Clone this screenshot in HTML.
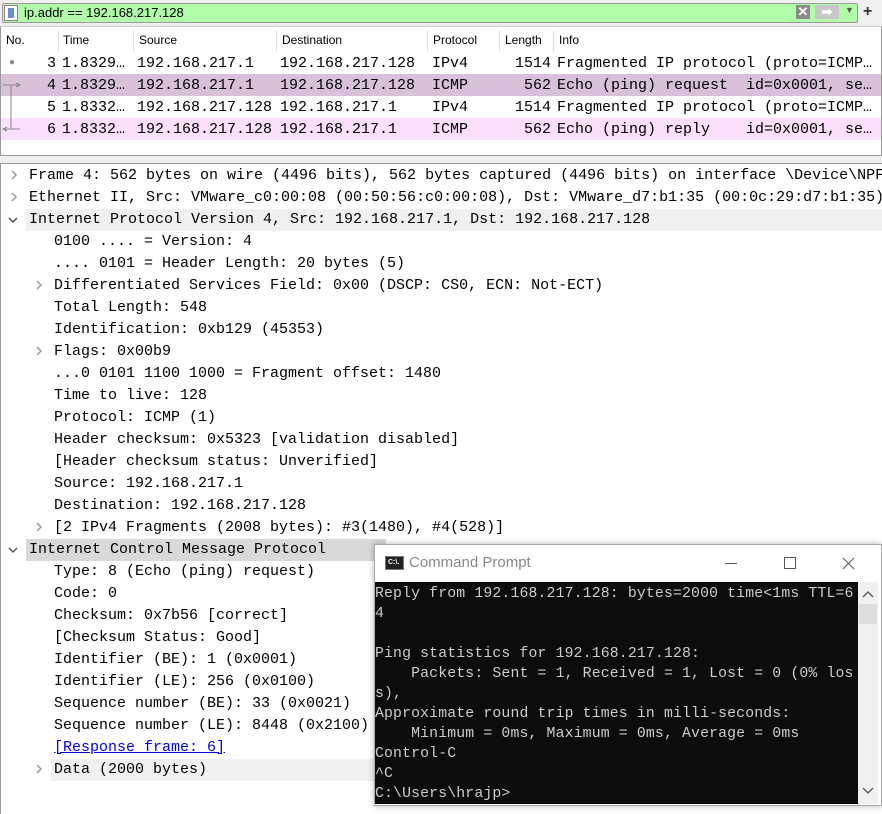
<!DOCTYPE html>
<html><head><meta charset="utf-8"><style>
*{margin:0;padding:0;box-sizing:border-box}
body{width:882px;height:814px;background:#fff;position:relative;overflow:hidden;font-family:"Liberation Mono",monospace;font-size:15px;color:#000}
.abs{position:absolute;white-space:pre}
.sans{font-family:"Liberation Sans",sans-serif;font-size:12px}
.row{position:absolute;left:1px;width:880px;height:22px}
.t{position:absolute;white-space:pre;line-height:22px}
.chev{position:absolute;width:10px;height:10px}
</style></head><body>
<!-- filter bar -->
<div class="abs" style="left:0;top:0;width:882px;height:26px;background:#f0f0f0"></div>
<div class="abs" style="left:2px;top:3px;width:856px;height:20px;background:#b0fca8;border:1px solid #999;border-radius:2px"></div>
<div class="abs" style="left:4px;top:5px;width:14px;height:16px;background:#fff;border:1px solid #888"><div style="margin:2px 3px;width:6px;height:10px;background:#6a8fd0"></div></div>
<div class="abs sans" style="left:24px;top:5px;font-size:13px;line-height:16px">ip.addr == 192.168.217.128</div>
<div class="abs" style="left:796px;top:5px;width:14px;height:14px;background:#8a8a8a;color:#fff;font:bold 13px 'Liberation Sans';text-align:center;line-height:14px">✕</div>
<div class="abs" style="left:815px;top:5px;width:24px;height:14px;background:#c8c8c8;color:#fff;font:bold 13px 'Liberation Sans';text-align:center;line-height:14px">➡</div>
<div class="abs sans" style="left:845px;top:5px;font-size:9px;color:#555">▼</div>
<div class="abs sans" style="left:863px;top:3px;font-size:16px;font-weight:bold;color:#333">+</div>
<!-- packet list -->
<div class="abs" style="left:0;top:26px;width:882px;height:130px;border:1px solid #999;border-top-color:#ccc"></div>
<div class="sans abs" style="top:33px;left:6px">No.</div>
<div class="sans abs" style="top:33px;left:63px">Time</div>
<div class="sans abs" style="top:33px;left:139px">Source</div>
<div class="sans abs" style="top:33px;left:282px">Destination</div>
<div class="sans abs" style="top:33px;left:433px">Protocol</div>
<div class="sans abs" style="top:33px;left:505px">Length</div>
<div class="sans abs" style="top:33px;left:559px">Info</div>
<div class="abs" style="left:58px;top:30px;width:1px;height:22px;background:#ddd"></div>
<div class="abs" style="left:133px;top:30px;width:1px;height:22px;background:#ddd"></div>
<div class="abs" style="left:276px;top:30px;width:1px;height:22px;background:#ddd"></div>
<div class="abs" style="left:427px;top:30px;width:1px;height:22px;background:#ddd"></div>
<div class="abs" style="left:499px;top:30px;width:1px;height:22px;background:#ddd"></div>
<div class="abs" style="left:553px;top:30px;width:1px;height:22px;background:#ddd"></div>

<div class="row" style="top:52px"><span class="t" style="left:8px;top:1px;color:#888;font-size:10px">●</span><span class="t" style="left:46px;top:1px">3</span><span class="t" style="left:61px;top:1px">1.8329…</span><span class="t" style="left:136px;top:1px">192.168.217.1</span><span class="t" style="left:279px;top:1px">192.168.217.128</span><span class="t" style="left:431px;top:1px">IPv4</span><span class="t" style="left:514px;top:1px">1514</span><span class="t" style="left:556px;top:1px">Fragmented IP protocol (proto=ICMP…</span></div>
<div class="row" style="top:74px;background:#d8c1d8"><span class="t" style="left:46px;top:1px">4</span><span class="t" style="left:61px;top:1px">1.8329…</span><span class="t" style="left:136px;top:1px">192.168.217.1</span><span class="t" style="left:279px;top:1px">192.168.217.128</span><span class="t" style="left:431px;top:1px">ICMP</span><span class="t" style="left:523px;top:1px">562</span><span class="t" style="left:556px;top:1px">Echo (ping) request  id=0x0001, se…</span></div>
<div class="row" style="top:96px"><span class="t" style="left:46px;top:1px">5</span><span class="t" style="left:61px;top:1px">1.8332…</span><span class="t" style="left:136px;top:1px">192.168.217.128</span><span class="t" style="left:279px;top:1px">192.168.217.1</span><span class="t" style="left:431px;top:1px">IPv4</span><span class="t" style="left:514px;top:1px">1514</span><span class="t" style="left:556px;top:1px">Fragmented IP protocol (proto=ICMP…</span></div>
<div class="row" style="top:118px;background:#fbdffb"><span class="t" style="left:46px;top:1px">6</span><span class="t" style="left:61px;top:1px">1.8332…</span><span class="t" style="left:136px;top:1px">192.168.217.128</span><span class="t" style="left:279px;top:1px">192.168.217.1</span><span class="t" style="left:431px;top:1px">ICMP</span><span class="t" style="left:523px;top:1px">562</span><span class="t" style="left:556px;top:1px">Echo (ping) reply    id=0x0001, se…</span></div>
<svg class="abs" style="left:0;top:80px" width="24" height="56"><path d="M3 5H20M16 3L20 5L16 7M11 5V49M3 49H20M7 47L3 49L7 51" stroke="#888" fill="none" stroke-width="1"/></svg>

<div class="abs" style="left:0;top:156px;width:882px;height:7px;background:#f0f0f0"></div>
<!-- details -->
<div class="abs" style="left:0;top:163px;width:882px;height:651px;border-left:1px solid #999;border-top:1px solid #999"></div>
<div class="abs" style="left:26px;top:209px;width:856px;height:22px;background:#f0f0f0"></div>
<div class="abs" style="left:26px;top:539px;width:360px;height:22px;background:#d9d9d9"></div>
<div class="abs" style="left:51px;top:759px;width:330px;height:22px;background:#f0f0f0"></div>
<svg class="chev" style="left:9px;top:170px"><path d="M3 1L7 5L3 9" stroke="#999" fill="none" stroke-width="1.5"/></svg>
<svg class="chev" style="left:9px;top:192px"><path d="M3 1L7 5L3 9" stroke="#999" fill="none" stroke-width="1.5"/></svg>
<svg class="chev" style="left:8px;top:215px"><path d="M1 3L5 7L9 3" stroke="#555" fill="none" stroke-width="1.5"/></svg>
<svg class="chev" style="left:34px;top:280px"><path d="M3 1L7 5L3 9" stroke="#999" fill="none" stroke-width="1.5"/></svg>
<svg class="chev" style="left:34px;top:346px"><path d="M3 1L7 5L3 9" stroke="#999" fill="none" stroke-width="1.5"/></svg>
<svg class="chev" style="left:34px;top:522px"><path d="M3 1L7 5L3 9" stroke="#999" fill="none" stroke-width="1.5"/></svg>
<svg class="chev" style="left:8px;top:545px"><path d="M1 3L5 7L9 3" stroke="#555" fill="none" stroke-width="1.5"/></svg>
<svg class="chev" style="left:34px;top:764px"><path d="M3 1L7 5L3 9" stroke="#999" fill="none" stroke-width="1.5"/></svg>
<div class="t" style="left:29px;top:165px">Frame 4: 562 bytes on wire (4496 bits), 562 bytes captured (4496 bits) on interface \Device\NPF</div>
<div class="t" style="left:29px;top:187px">Ethernet II, Src: VMware_c0:00:08 (00:50:56:c0:00:08), Dst: VMware_d7:b1:35 (00:0c:29:d7:b1:35)</div>
<div class="t" style="left:29px;top:209px">Internet Protocol Version 4, Src: 192.168.217.1, Dst: 192.168.217.128</div>
<div class="t" style="left:54px;top:231px">0100 .... = Version: 4</div>
<div class="t" style="left:54px;top:253px">.... 0101 = Header Length: 20 bytes (5)</div>
<div class="t" style="left:54px;top:275px">Differentiated Services Field: 0x00 (DSCP: CS0, ECN: Not-ECT)</div>
<div class="t" style="left:54px;top:297px">Total Length: 548</div>
<div class="t" style="left:54px;top:319px">Identification: 0xb129 (45353)</div>
<div class="t" style="left:54px;top:341px">Flags: 0x00b9</div>
<div class="t" style="left:54px;top:363px">...0 0101 1100 1000 = Fragment offset: 1480</div>
<div class="t" style="left:54px;top:385px">Time to live: 128</div>
<div class="t" style="left:54px;top:407px">Protocol: ICMP (1)</div>
<div class="t" style="left:54px;top:429px">Header checksum: 0x5323 [validation disabled]</div>
<div class="t" style="left:54px;top:451px">[Header checksum status: Unverified]</div>
<div class="t" style="left:54px;top:473px">Source: 192.168.217.1</div>
<div class="t" style="left:54px;top:495px">Destination: 192.168.217.128</div>
<div class="t" style="left:54px;top:517px">[2 IPv4 Fragments (2008 bytes): #3(1480), #4(528)]</div>
<div class="t" style="left:29px;top:539px">Internet Control Message Protocol</div>
<div class="t" style="left:54px;top:561px">Type: 8 (Echo (ping) request)</div>
<div class="t" style="left:54px;top:583px">Code: 0</div>
<div class="t" style="left:54px;top:605px">Checksum: 0x7b56 [correct]</div>
<div class="t" style="left:54px;top:627px">[Checksum Status: Good]</div>
<div class="t" style="left:54px;top:649px">Identifier (BE): 1 (0x0001)</div>
<div class="t" style="left:54px;top:671px">Identifier (LE): 256 (0x0100)</div>
<div class="t" style="left:54px;top:693px">Sequence number (BE): 33 (0x0021)</div>
<div class="t" style="left:54px;top:715px">Sequence number (LE): 8448 (0x2100)</div>
<div class="t" style="left:54px;top:737px;color:#0000ee;text-decoration:underline">[Response frame: 6]</div>
<div class="t" style="left:54px;top:759px">Data (2000 bytes)</div>
<!-- cmd window -->
<div class="abs" style="left:374px;top:544px;width:508px;height:262px;background:#fff;border:1px solid #aaa;box-shadow:0 0 6px rgba(0,0,0,.3)"></div>
<div class="abs" style="left:385px;top:556px;width:19px;height:14px;background:#222;border:1px solid #777;color:#fff;font:bold 7px 'Liberation Sans';line-height:12px;padding-left:2px">C:\.</div>
<div class="abs" style="left:409px;top:554px;font:15px 'Liberation Sans',sans-serif;color:#888">Command Prompt</div>
<div class="abs" style="left:725px;top:563px;width:12px;height:1px;background:#555"></div>
<div class="abs" style="left:784px;top:557px;width:12px;height:12px;border:1px solid #555"></div>
<svg class="abs" style="left:842px;top:557px" width="13" height="13"><path d="M1 1L12 12M12 1L1 12" stroke="#666" stroke-width="1.2"/></svg>
<div class="abs" style="left:375px;top:582px;width:483px;height:222px;background:#0c0c0c"></div>
<div class="abs" style="left:858px;top:582px;width:20px;height:222px;background:#f0f0f0"></div>
<div class="abs" style="left:859px;top:604px;width:18px;height:20px;background:#ddd"></div>
<svg class="abs" style="left:862px;top:591px" width="12" height="8"><path d="M1 6L6 1L11 6" stroke="#555" fill="none" stroke-width="1.3"/></svg>
<svg class="abs" style="left:862px;top:787px" width="12" height="8"><path d="M1 1L6 6L11 1" stroke="#555" fill="none" stroke-width="1.3"/></svg>
<div class="abs" style="left:375px;top:584px;color:#ccc;line-height:20px;font-size:14.8px;letter-spacing:0.15px">Reply from 192.168.217.128: bytes=2000 time&lt;1ms TTL=6
4

Ping statistics for 192.168.217.128:
    Packets: Sent = 1, Received = 1, Lost = 0 (0% los
s),
Approximate round trip times in milli-seconds:
    Minimum = 0ms, Maximum = 0ms, Average = 0ms
Control-C
^C
C:\Users\hrajp&gt;</div>
</body></html>
